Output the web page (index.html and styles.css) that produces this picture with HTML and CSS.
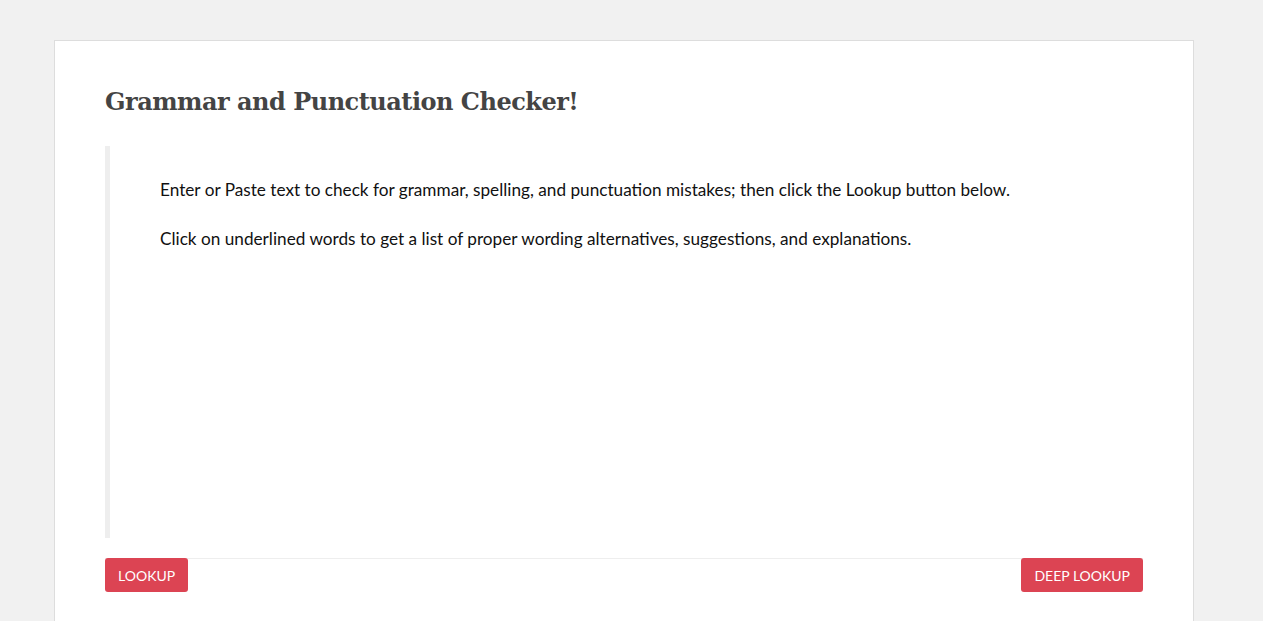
FILE: index.html
```html
<!DOCTYPE html>
<html lang="en">
<head>
<meta charset="utf-8">
<title>Grammar and Punctuation Checker</title>
<link rel="stylesheet" href="styles.css">
</head>
<body>
<main class="card">
  <h1 class="title">Grammar and Punctuation Checker!</h1>
  <div class="editor" contenteditable="true">
    <p>Enter or Paste text to check for grammar, spelling, and punctuation mistakes; then click the Lookup button below.</p>
    <p>Click on underlined words to get a list of proper wording alternatives, suggestions, and explanations.</p>
  </div>
  <div class="actions">
    <button class="btn">LOOKUP</button>
    <button class="btn">DEEP LOOKUP</button>
  </div>
</main>
</body>
</html>
```
FILE: styles.css
```css
html, body {
  margin: 0;
  padding: 0;
  background: #f1f1f1;
}
body {
  padding: 40px 0 0 54px;
  font-family: "Lato", "Open Sans", sans-serif;
}
.card {
  width: 1038px;
  background: #fff;
  border: 1px solid #dddddd;
  padding: 44px 50px 40px 50px;
}
.title {
  margin: 0 0 27px 0;
  font-family: "DejaVu Serif", serif;
  font-weight: bold;
  font-size: 24px;
  line-height: 34px;
  color: #444;
  letter-spacing: -0.5px;
}
.editor {
  border-left: 5px solid #eeeeee;
  height: 360px;
  padding: 32px 50px 0 50px;
  color: #111;
  font-size: 17.2px;
  line-height: 24px;
  outline: none;
}
.editor p {
  margin: 0 0 25px 0;
}
.actions {
  margin-top: 20px;
  border-top: 1px solid #eeeeee;
  display: flex;
  justify-content: space-between;
}
.btn {
  margin-top: -1px;
  height: 34px;
  padding: 0 13px;
  border: none;
  border-radius: 3px;
  background: #dc4453;
  color: #fff;
  font-family: "Lato", "Open Sans", sans-serif;
  font-size: 14px;
  cursor: pointer;
}
```
